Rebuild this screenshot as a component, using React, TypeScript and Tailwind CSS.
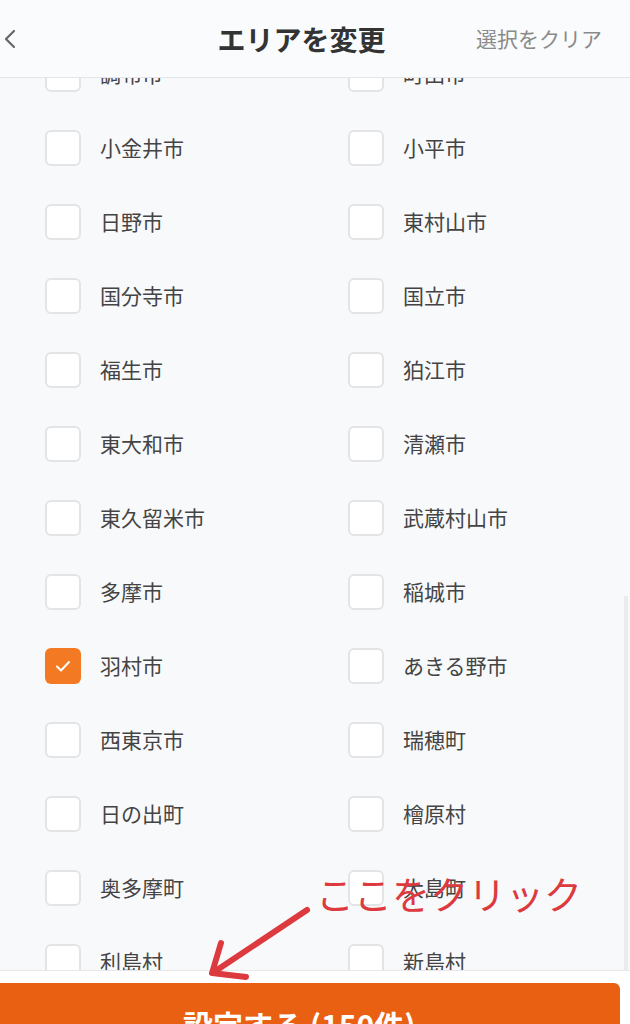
import React from "react";

const rows: [string, string][] = [
  ["調布市", "町田市"],
  ["小金井市", "小平市"],
  ["日野市", "東村山市"],
  ["国分寺市", "国立市"],
  ["福生市", "狛江市"],
  ["東大和市", "清瀬市"],
  ["東久留米市", "武蔵村山市"],
  ["多摩市", "稲城市"],
  ["羽村市", "あきる野市"],
  ["西東京市", "瑞穂町"],
  ["日の出町", "檜原村"],
  ["奥多摩町", "大島町"],
  ["利島村", "新島村"],
];

function Item({ label, checked }: { label: string; checked?: boolean }) {
  return (
    <div className="flex items-center h-[74px]">
      {checked ? (
        <span className="w-9 h-9 rounded-md bg-[#f37a22] flex items-center justify-center">
          <svg width="20" height="20" viewBox="0 0 20 20" fill="none">
            <path d="M4 10.5l4 4 8-8.5" stroke="#fff" strokeWidth="2" strokeLinecap="round" strokeLinejoin="round" />
          </svg>
        </span>
      ) : (
        <span className="w-9 h-9 rounded-md bg-white border-2 border-[#e3e4e6]" />
      )}
      <span className="ml-[19px] text-[21px] text-[#444]">{label}</span>
    </div>
  );
}

export default function App() {
  return (
    <div
      className="relative h-[1024px] w-[630px] overflow-hidden bg-[#f8f9fb]"
      style={{ fontFamily: '"Noto Sans CJK JP", "Noto Sans", sans-serif' }}
    >
      <div className="pt-[37px]">
        {rows.map(([l, r], i) => (
          <div key={i} className="grid grid-cols-[303px_1fr] pl-[45px]">
            <Item label={l} checked={l === "羽村市"} />
            <Item label={r} />
          </div>
        ))}
      </div>

      {/* header */}
      <div className="absolute top-0 left-0 right-0 h-[78px] bg-[#fafbfc] border-b border-[#e4e5e8] flex items-center">
        <svg className="ml-[2px]" width="16" height="26" viewBox="0 0 16 26" fill="none">
          <path d="M12 5l-8 8 8 8" stroke="#666" strokeWidth="2.2" strokeLinecap="round" strokeLinejoin="round" />
        </svg>
        <div className="absolute left-0 right-0 text-center text-[28px] font-bold text-[#333] pr-[27px]">エリアを変更</div>
        <div className="absolute right-[28px] text-[21px] text-[#8a8a8a]">選択をクリア</div>
      </div>

      {/* scrollbar */}
      <div className="absolute right-[2px] top-[596px] w-[4px] h-[380px] bg-[#ebebeb]" />

      {/* footer */}
      <div className="absolute left-0 right-0 bottom-0 h-[54px] bg-white border-t border-[#e8e8e8]">
        <div className="mt-[12px] mr-[10px] h-[60px] bg-[#ea6012] rounded-tr-md text-white font-bold text-[30px] pl-[183px] pt-[26px] leading-none">
          設定する (150件)
        </div>
      </div>

      {/* annotation */}
      <div className="absolute left-[316px] top-[874px] text-[38px] text-[#dd3a40] leading-none">
        ここをクリック
      </div>
      <svg className="absolute left-0 top-0" width="630" height="1024" fill="none">
        <path d="M307 910L214 972" stroke="#dd3a40" strokeWidth="6" strokeLinecap="round" />
        <path d="M221 943L212 973L246 977" stroke="#dd3a40" strokeWidth="6" strokeLinecap="round" strokeLinejoin="round" />
      </svg>
    </div>
  );
}
